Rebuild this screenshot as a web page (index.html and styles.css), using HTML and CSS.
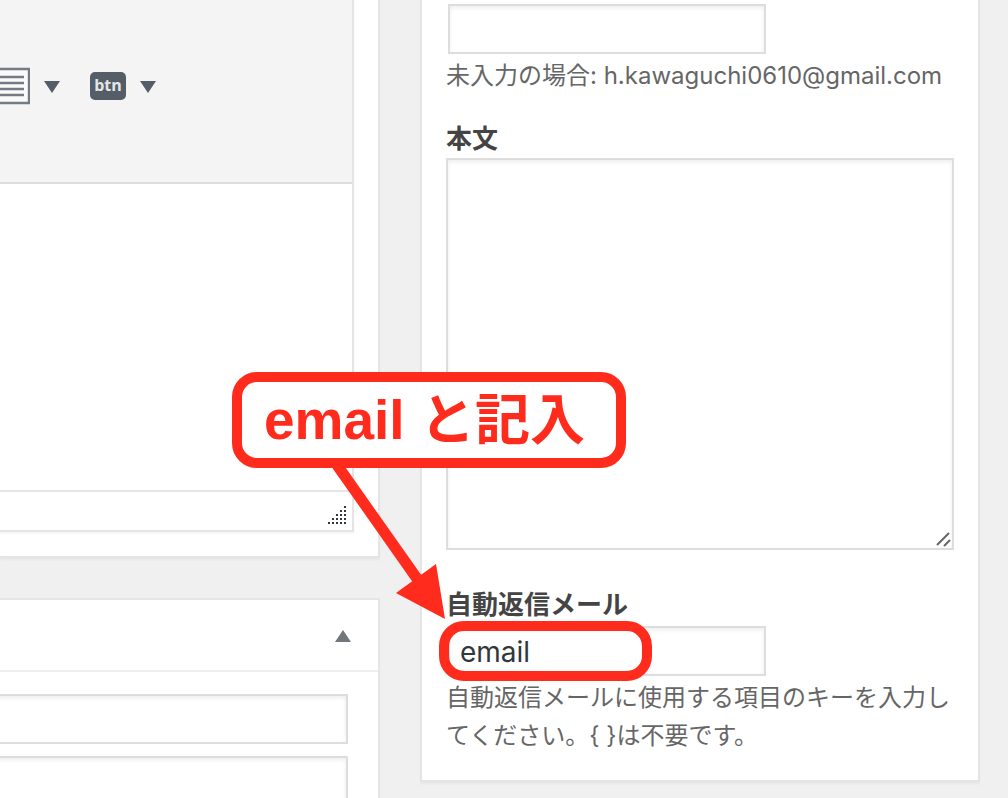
FILE: index.html
```html
<!DOCTYPE html>
<html lang="ja">
<head>
    <meta charset="UTF-8">
    <meta name="viewport" content="width=device-width, initial-scale=1.0">
    <title>自動返信メール設定</title>
    <link rel="stylesheet" href="styles.css">
</head>
<body>
    <div class="container">
        <main class="main-column">
            <section class="card editor-card">
                <div class="editor">
                    <div class="toolbar">
                        <button type="button" class="tool-button" aria-label="リスト">
                            <svg width="30" height="38" viewBox="0 0 30 38">
                                <path d="M0 2H29V36H0" fill="#fafafa" stroke="#747b85" stroke-width="2.4"/>
                                <path d="M0 10H24M0 16H24M0 22H24M0 28H24" fill="none" stroke="#747b85" stroke-width="2.4"/>
                            </svg>
                            <svg width="16" height="14" viewBox="0 0 16 14"><path d="M0 2H16L8 14Z" fill="#555d66"/></svg>
                        </button>
                        <button type="button" class="tool-button">
                            <span class="btn-icon">btn</span>
                            <svg width="16" height="14" viewBox="0 0 16 14"><path d="M0 2H16L8 14Z" fill="#555d66"/></svg>
                        </button>
                    </div>
                    <textarea class="editor-body" aria-label="本文エディター"></textarea>
                    <div class="status-bar">
                        <svg width="20" height="20" viewBox="0 0 20 20" fill="#32373c">
                            <path d="M17 1h2v2h-2zM13 5h2v2h-2zM17 5h2v2h-2zM9 9h2v2h-2zM13 9h2v2h-2zM17 9h2v2h-2zM5 13h2v2h-2zM9 13h2v2h-2zM13 13h2v2h-2zM17 13h2v2h-2zM1 17h2v2h-2zM5 17h2v2h-2zM9 17h2v2h-2zM13 17h2v2h-2zM17 17h2v2h-2z"/>
                        </svg>
                    </div>
                </div>
            </section>

            <section class="card">
                <div class="card-header">
                    <button type="button" class="toggle-button" aria-label="パネルを閉じる">
                        <svg width="16" height="12" viewBox="0 0 16 12"><path d="M8 0L16 12H0Z" fill="#72777c"/></svg>
                    </button>
                </div>
                <div class="card-fields">
                    <input type="text" class="text-input" aria-label="項目1">
                    <input type="text" class="text-input" aria-label="項目2">
                </div>
            </section>
        </main>

        <aside class="card side-card">
            <div class="field">
                <input type="text" class="text-input short" aria-label="送信先" aria-describedby="toHelp">
                <p class="description" id="toHelp">未入力の場合: h.kawaguchi0610@gmail.com</p>
            </div>
            <div class="field">
                <label for="mailBody">本文</label>
                <div class="textarea-wrap">
                    <textarea id="mailBody" class="mail-body"></textarea>
                    <svg class="resize-grip" width="16" height="16" viewBox="0 0 16 16">
                        <path d="M2 14L14 2M9 15L15 9" fill="none" stroke="#666" stroke-width="2"/>
                    </svg>
                </div>
            </div>
            <div class="field reply-field">
                <label for="replyKey">自動返信メール</label>
                <input type="text" id="replyKey" class="text-input short" value="email" aria-describedby="replyHelp">
                <p class="description" id="replyHelp">自動返信メールに使用する項目のキーを入力してください。{ }は不要です。</p>

                <!-- 入力箇所の案内 -->
                <svg class="arrow" width="120" height="162" viewBox="0 0 120 162">
                    <path d="M7 5L88 120" fill="none" stroke="#ff2b1d" stroke-width="11"/>
                    <path d="M115 159L66 133L106 104Z" fill="#ff2b1d"/>
                </svg>
                <div class="highlight"></div>
                <div class="callout">email と記入</div>
            </div>
        </aside>
    </div>
</body>
</html>
```
FILE: styles.css
```css
* {
    margin: 0;
    padding: 0;
    box-sizing: border-box;
}

body {
    height: 100vh;
    overflow: hidden;
    background-color: #f0f0f0;
    color: #444;
    font-family: Inter, "Noto Sans CJK JP", sans-serif;
    font-size: 24px;
    line-height: 38px;
}

button {
    border: none;
    background: none;
    cursor: pointer;
}

svg {
    display: block;
}

.container {
    display: grid;
    grid-template-columns: minmax(0, 1fr) 560px;
    gap: 40px;
    align-items: start;
    padding-right: 28px;
}

.main-column {
    display: flex;
    flex-direction: column;
    gap: 40px;
}

.card {
    background-color: #fff;
    border: 2px solid #e5e5e5;
    box-shadow: 0 2px 2px rgba(0, 0, 0, 0.04);
}

.main-column .card {
    border-left: none;
}

/* エディター */
.main-column .editor-card {
    border-top: none;
    padding: 0 24px 24px 0;
}

.editor {
    border: 2px solid #e5e5e5;
    border-width: 0 2px 2px 0;
    box-shadow: 0 2px 2px rgba(0, 0, 0, 0.04);
}

.toolbar {
    display: flex;
    align-items: center;
    gap: 30px;
    padding: 67px 0 77px;
    background-color: #f4f4f4;
    border-bottom: 2px solid #ddd;
}

.tool-button {
    display: flex;
    align-items: center;
    gap: 14px;
    height: 38px;
}

.btn-icon {
    width: 36px;
    height: 28px;
    border-radius: 5px;
    background-color: #555d66;
    color: #e4e6e8;
    font-family: "Open Sans", sans-serif;
    font-size: 16px;
    font-weight: bold;
    line-height: 27px;
    text-align: center;
}

.editor-body {
    display: block;
    width: 100%;
    height: 306px;
    border: none;
    resize: none;
}

.status-bar {
    display: flex;
    justify-content: flex-end;
    padding: 13px 5px 5px;
    border-top: 2px solid #e5e5e5;
}

/* 下のパネル */
.card-header {
    display: flex;
    justify-content: flex-end;
    padding: 30px 27px 28px;
    border-bottom: 2px solid #eee;
}

.card-fields {
    display: flex;
    flex-direction: column;
    gap: 12px;
    margin-left: -8px;
    padding: 22px 30px 22px 0;
}

.text-input,
.mail-body {
    display: block;
    width: 100%;
    border: 2px solid #ddd;
    border-radius: 0;
    outline: none;
    background-color: #fff;
    box-shadow: inset 0 2px 4px rgba(0, 0, 0, 0.07);
    color: #32373c;
    font-family: inherit;
    font-size: 28px;
}

.text-input {
    height: 50px;
    padding: 2px 10px 0;
}

.text-input.short {
    width: 318px;
    margin: 4px 0 3px 2px;
}

/* サイドバー */
.side-card {
    border-top: none;
    padding: 0 24px 25px;
}

.field label {
    display: block;
    padding-top: 26px;
    margin-bottom: 1px;
    font-size: 26px;
    font-weight: bold;
    line-height: 36px;
}

.field .description {
    color: #666;
}

.textarea-wrap {
    position: relative;
}

.mail-body {
    height: 392px;
    padding: 4px 12px;
    resize: none;
}

.resize-grip {
    position: absolute;
    right: 3px;
    bottom: 3px;
}

.reply-field {
    position: relative;
    margin-top: 11px;
}

.reply-field label {
    margin-bottom: -1px;
}

/* 案内の吹き出し */
.callout,
.highlight,
.arrow {
    position: absolute;
    pointer-events: none;
}

.callout,
.highlight {
    border: 10px solid #ff2b1d;
    border-radius: 25px;
}

.highlight {
    top: 60px;
    left: -7px;
    width: 213px;
    height: 60px;
}

.arrow {
    top: -101px;
    left: -116px;
}

.callout {
    top: -189px;
    left: -214px;
    width: 394px;
    padding: 0 22px;
    background-color: #fff;
    color: #ff2b1d;
    font-family: "Liberation Sans", "Noto Sans CJK JP", sans-serif;
    font-size: 55px;
    font-weight: bold;
    line-height: 76px;
    white-space: nowrap;
}
```
